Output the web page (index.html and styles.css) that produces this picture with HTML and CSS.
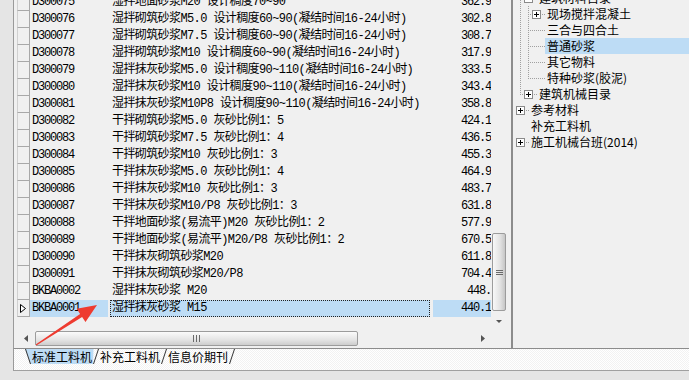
FILE: index.html
```html
<!DOCTYPE html>
<html lang="zh-CN">

<head>
    <meta charset="UTF-8">
    <title>工料机</title>
    <link rel="stylesheet" href="styles.css">
</head>

<body>
    <div class="app">
        <div class="main">
            <div class="grid">
                <div class="grid-body">
                    <div class="rows">
                        <div class="row"><div class="rh"></div><div class="code">D300075</div><div class="name">湿拌地面砂浆M20 设计稠度70~90</div><div class="price">362.9</div></div>
                        <div class="row"><div class="rh"></div><div class="code">D300076</div><div class="name">湿拌砌筑砂浆M5.0 设计稠度60~90(凝结时间16-24小时)</div><div class="price">302.8</div></div>
                        <div class="row"><div class="rh"></div><div class="code">D300077</div><div class="name">湿拌砌筑砂浆M7.5 设计稠度60~90(凝结时间16-24小时)</div><div class="price">308.7</div></div>
                        <div class="row"><div class="rh"></div><div class="code">D300078</div><div class="name">湿拌砌筑砂浆M10 设计稠度60~90(凝结时间16-24小时)</div><div class="price">317.9</div></div>
                        <div class="row"><div class="rh"></div><div class="code">D300079</div><div class="name">湿拌抹灰砂浆M5.0 设计稠度90~110(凝结时间16-24小时)</div><div class="price">333.5</div></div>
                        <div class="row"><div class="rh"></div><div class="code">D300080</div><div class="name">湿拌抹灰砂浆M10 设计稠度90~110(凝结时间16-24小时)</div><div class="price">343.4</div></div>
                        <div class="row"><div class="rh"></div><div class="code">D300081</div><div class="name">湿拌抹灰砂浆M10P8 设计稠度90~110(凝结时间16-24小时)</div><div class="price">358.8</div></div>
                        <div class="row"><div class="rh"></div><div class="code">D300082</div><div class="name">干拌砌筑砂浆M5.0 灰砂比例1：5</div><div class="price">424.1</div></div>
                        <div class="row"><div class="rh"></div><div class="code">D300083</div><div class="name">干拌砌筑砂浆M7.5 灰砂比例1：4</div><div class="price">436.5</div></div>
                        <div class="row"><div class="rh"></div><div class="code">D300084</div><div class="name">干拌砌筑砂浆M10 灰砂比例1：3</div><div class="price">455.3</div></div>
                        <div class="row"><div class="rh"></div><div class="code">D300085</div><div class="name">干拌抹灰砂浆M5.0 灰砂比例1：4</div><div class="price">464.9</div></div>
                        <div class="row"><div class="rh"></div><div class="code">D300086</div><div class="name">干拌抹灰砂浆M10 灰砂比例1：3</div><div class="price">483.7</div></div>
                        <div class="row"><div class="rh"></div><div class="code">D300087</div><div class="name">干拌抹灰砂浆M10/P8 灰砂比例1：3</div><div class="price">631.8</div></div>
                        <div class="row"><div class="rh"></div><div class="code">D300088</div><div class="name">干拌地面砂浆(易流平)M20 灰砂比例1：2</div><div class="price">577.9</div></div>
                        <div class="row"><div class="rh"></div><div class="code">D300089</div><div class="name">干拌地面砂浆(易流平)M20/P8 灰砂比例1：2</div><div class="price">670.5</div></div>
                        <div class="row"><div class="rh"></div><div class="code">D300090</div><div class="name">干拌抹灰砌筑砂浆M20</div><div class="price">611.8</div></div>
                        <div class="row"><div class="rh"></div><div class="code">D300091</div><div class="name">干拌抹灰砌筑砂浆M20/P8</div><div class="price">704.4</div></div>
                        <div class="row"><div class="rh"></div><div class="code">BKBA0002</div><div class="name">湿拌抹灰砂浆 M20</div><div class="price">448.</div></div>
                        <div class="row sel">
                            <div class="rh"><svg width="6" height="9"><path d="M.5 .5L5.5 4.5L.5 8.5Z" fill="#fff" stroke="#000" /></svg></div>
                            <div class="code">BKBA0001</div><div class="name">湿拌抹灰砂浆 M15</div><div class="price">440.1</div>
                        </div>
                    </div>

                    <!-- vertical scrollbar -->
                    <div class="vscroll">
                        <div class="vtrack">
                            <div class="vthumb"><svg width="7" height="5"><path d="M0 .5h7M0 2.5h7M0 4.5h7" stroke="#6a6a6a" /></svg></div>
                        </div>
                        <div class="sbtn"><svg width="6" height="3"><path d="M0 0h6L3 3Z" fill="#555" /></svg></div>
                    </div>
                </div>

                <!-- horizontal scrollbar -->
                <div class="hscroll">
                    <div class="sbtn hbtn-left"><svg width="4" height="7"><path d="M4 0v7L0 3.5Z" fill="#555" /></svg></div>
                    <div class="hthumb"><svg width="7" height="7"><path d="M.5 0v7M3.5 0v7M6.5 0v7" stroke="#6a6a6a" /></svg></div>
                    <div class="htrack"></div>
                    <div class="sbtn"><svg width="4" height="7"><path d="M0 0v7L4 3.5Z" fill="#555" /></svg></div>
                    <div class="corner"></div>
                </div>
            </div>

            <div class="splitter"></div>

            <div class="tree">
                <div class="tree-list">
                    <div class="tn"><span class="g tee"></span><span class="nc"><svg class="box" width="9" height="9"><rect x=".5" y=".5" width="8" height="8" fill="#fff" stroke="#8a8a8a" /><path d="M2 4.5h5" stroke="#000" /></svg></span><span class="lbl">建筑材料目录</span></div>
                    <div class="tn"><span class="g pipe"></span><span class="g tee"></span><span class="nc"><svg class="box" width="9" height="9"><rect x=".5" y=".5" width="8" height="8" fill="#fff" stroke="#8a8a8a" /><path d="M2 4.5h5M4.5 2v5" stroke="#000" /></svg></span><span class="lbl">现场搅拌混凝土</span></div>
                    <div class="tn"><span class="g pipe"></span><span class="g tee"></span><span class="nc"></span><span class="lbl">三合与四合土</span></div>
                    <div class="tn"><span class="g pipe"></span><span class="g tee"></span><span class="nc"></span><span class="lbl sel">普通砂浆</span></div>
                    <div class="tn"><span class="g pipe"></span><span class="g tee"></span><span class="nc"></span><span class="lbl">其它物料</span></div>
                    <div class="tn"><span class="g pipe"></span><span class="g elbow"></span><span class="nc"></span><span class="lbl">特种砂浆(胶泥)</span></div>
                    <div class="tn"><span class="g elbow"></span><span class="nc"><svg class="box" width="9" height="9"><rect x=".5" y=".5" width="8" height="8" fill="#fff" stroke="#8a8a8a" /><path d="M2 4.5h5M4.5 2v5" stroke="#000" /></svg></span><span class="lbl">建筑机械目录</span></div>
                    <div class="tn"><span class="nc root"><svg class="box" width="9" height="9"><rect x=".5" y=".5" width="8" height="8" fill="#fff" stroke="#8a8a8a" /><path d="M2 4.5h5M4.5 2v5" stroke="#000" /></svg></span><span class="lbl">参考材料</span></div>
                    <div class="tn"><span class="nc leaf"></span><span class="lbl">补充工料机</span></div>
                    <div class="tn"><span class="nc root"><svg class="box" width="9" height="9"><rect x=".5" y=".5" width="8" height="8" fill="#fff" stroke="#8a8a8a" /><path d="M2 4.5h5M4.5 2v5" stroke="#000" /></svg></span><span class="lbl">施工机械台班(2014)</span></div>
                </div>
            </div>
        </div>

        <div class="tabbar">
            <svg class="slash" width="6" height="15"><path d="M0 0L6 15H6V0Z" fill="#bddcf5" /><path d="M.5 0L5.5 15" stroke="#333" /></svg>
            <span class="tab active">标准工料机</span>
            <svg class="slash" width="6" height="15"><path d="M0 0H0.5L0 15Z" fill="#bddcf5" /><path d="M5.5 0L.5 15" stroke="#333" /></svg>
            <span class="tab">补充工料机</span>
            <svg class="slash" width="6" height="15"><path d="M5.5 0L.5 15" stroke="#333" /></svg>
            <span class="tab">信息价期刊</span>
            <svg class="slash" width="6" height="15"><path d="M5.5 0L.5 15" stroke="#333" /></svg>
        </div>
    </div>

    <!-- red annotation arrow -->
    <svg class="callout" width="689" height="380">
        <path d="M97 305L85.5 322.1L82.1 316.9L36.3 345.5L35.7 344.5L80.1 313.9L76.7 308.7Z" fill="#ee3b30" />
    </svg>
</body>

</html>
```

FILE: styles.css
```css
* {
    margin: 0;
    padding: 0;
    box-sizing: border-box;
}

body {
    position: relative;
    width: 689px;
    height: 380px;
    overflow: hidden;
    background: #e5e5e5;
    font-family: "Liberation Mono", "Noto Sans CJK SC", monospace;
    font-size: 12px;
    color: #000;
}

.app {
    display: flex;
    flex-direction: column;
    height: 380px;
}

.main {
    display: flex;
    height: 348px;
    margin-left: 13px;
    border-left: 1px solid #9a9a9a;
    background: #f0f0f0;
}

/* grid */
.grid {
    width: 493px;
    display: flex;
    flex-direction: column;
}

.grid-body {
    display: flex;
    height: 330px;
}

.rows {
    width: 477px;
    overflow: hidden;
}

.row {
    display: flex;
    height: 17px;
    line-height: 17px;
    white-space: nowrap;
}

.row:first-child {
    margin-top: -6px;
}

.rh {
    width: 13px;
    margin-left: 3px;
    border-left: 1px solid #d0d0d0;
    border-right: 1px solid #a8a8a8;
    border-bottom: 1px solid #a8a8a8;
    display: flex;
    align-items: center;
    padding-left: 2px;
}

.code {
    width: 78px;
    padding-left: 2px;
    letter-spacing: -1.2px;
}

.name {
    width: 320px;
    margin-left: 2px;
    padding-left: 2px;
    letter-spacing: -0.6px;
    overflow: hidden;
}

.price {
    width: 58px;
    margin-left: 3px;
    text-align: right;
    letter-spacing: -1.2px;
}

.row.sel .code,
.row.sel .name,
.row.sel .price {
    background: #bddcf5;
}

.row.sel .name {
    outline: 1px dotted #222;
    outline-offset: -1px;
}

/* scrollbars */
.vscroll {
    width: 16px;
    display: flex;
    flex-direction: column;
}

.vtrack {
    flex: 1;
    padding-top: 233px;
}

.vthumb {
    height: 78px;
    margin: 0 1px;
    border: 1px solid #9c9c9c;
    border-radius: 2px;
    background: linear-gradient(to right, #f8f8f8, #e2e2e2 60%, #c6c6c6);
    display: flex;
    align-items: center;
    justify-content: center;
}

.sbtn {
    width: 17px;
    height: 17px;
    flex: none;
    display: flex;
    align-items: center;
    justify-content: center;
}

.vscroll .sbtn {
    width: 16px;
}

.hscroll {
    height: 17px;
    display: flex;
}

.hbtn-left {
    margin-left: 3px;
}

.hthumb {
    width: 323px;
    height: 15px;
    margin: 1px 0 0 1px;
    border: 1px solid #9c9c9c;
    border-radius: 2px;
    background: linear-gradient(to bottom, #fbfbfb, #e4e4e4 60%, #cdcdcd);
    display: flex;
    align-items: center;
    justify-content: center;
}

.htrack {
    flex: 1;
}

.corner {
    width: 16px;
}

.splitter {
    width: 6px;
    border-right: 2px solid #8c8c8c;
}

/* tree */
.tree {
    flex: 1;
    padding-left: 1px;
    overflow: hidden;
    font-family: "Noto Sans CJK SC", sans-serif;
}

.tree-list {
    margin-top: -10px;
}

.tn {
    display: flex;
    height: 16px;
    line-height: 16px;
    white-space: nowrap;
}

.g {
    width: 8px;
    flex: none;
    background-repeat: no-repeat;
}

.pipe {
    background-image: repeating-linear-gradient(to bottom, #a0a0a0 0 1px, transparent 1px 2px);
    background-size: 1px 100%;
    background-position: 6px 0;
}

.tee,
.elbow {
    background-image: repeating-linear-gradient(to bottom, #a0a0a0 0 1px, transparent 1px 2px),
        repeating-linear-gradient(to right, #a0a0a0 0 1px, transparent 1px 2px);
    background-size: 1px 100%, 2px 1px;
    background-position: 6px 0, 6px 8px;
}

.elbow {
    background-size: 1px 9px, 2px 1px;
}

.nc {
    width: 15px;
    flex: none;
    display: flex;
    align-items: center;
    background: repeating-linear-gradient(to right, #a0a0a0 0 1px, transparent 1px 2px) no-repeat;
    background-size: 100% 1px;
    background-position: 0 8px;
}

.nc.root {
    background-size: 5px 1px;
    background-position: 10px 8px;
}

.nc.leaf {
    background: none;
}

.box {
    display: block;
    margin-left: 2px;
}

.lbl {
    padding-left: 2px;
}

.lbl.sel {
    flex: 1;
    background: #bddcf5;
}

/* bottom tabs */
.tabbar {
    height: 23px;
    margin-left: 13px;
    border-left: 1px solid #9a9a9a;
    border-top: 1px solid #8c8c8c;
    border-bottom: 1px solid #a0a0a0;
    background: repeating-conic-gradient(#f2f2f2 0 25%, #fff 0 50%) 0 0 / 2px 2px;
    display: flex;
    align-items: flex-start;
    padding-left: 11px;
    font-family: "Noto Sans CJK SC", sans-serif;
}

.slash {
    display: block;
    flex: none;
}

.tab {
    height: 15px;
    line-height: 15px;
    padding: 0 1px;
}

.tab.active {
    background: #bddcf5;
}

.callout {
    position: absolute;
    top: 0;
    left: 0;
    pointer-events: none;
}
```
